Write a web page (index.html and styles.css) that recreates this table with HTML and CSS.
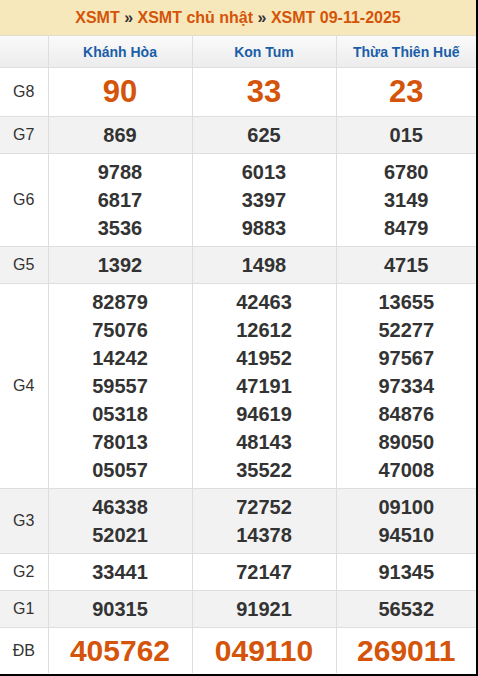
FILE: index.html
```html
<!DOCTYPE html>
<html lang="vi">
<head>
<meta charset="utf-8">
<title>XSMT 09-11-2025</title>
<link rel="stylesheet" href="styles.css">
</head>
<body>
<div class="frame">
  <div class="title">
    <span class="t">XSMT</span> <span class="sep">»</span> <span class="t">XSMT chủ nhật</span> <span class="sep">»</span> <span class="t">XSMT 09-11-2025</span>
  </div>
  <table class="kq">
    <colgroup>
      <col class="c-lbl"><col class="c-p"><col class="c-p"><col class="c-p3">
    </colgroup>
    <thead>
      <tr><th></th><th>Khánh Hòa</th><th>Kon Tum</th><th>Thừa Thiên Huế</th></tr>
    </thead>
    <tbody>
      <tr class="big"><td class="lbl">G8</td><td>90</td><td>33</td><td>23</td></tr>
      <tr class="alt"><td class="lbl">G7</td><td>869</td><td>625</td><td>015</td></tr>
      <tr><td class="lbl">G6</td><td>9788<br>6817<br>3536</td><td>6013<br>3397<br>9883</td><td>6780<br>3149<br>8479</td></tr>
      <tr class="alt"><td class="lbl">G5</td><td>1392</td><td>1498</td><td>4715</td></tr>
      <tr><td class="lbl">G4</td>
        <td>82879<br>75076<br>14242<br>59557<br>05318<br>78013<br>05057</td>
        <td>42463<br>12612<br>41952<br>47191<br>94619<br>48143<br>35522</td>
        <td>13655<br>52277<br>97567<br>97334<br>84876<br>89050<br>47008</td></tr>
      <tr class="alt"><td class="lbl">G3</td><td>46338<br>52021</td><td>72752<br>14378</td><td>09100<br>94510</td></tr>
      <tr><td class="lbl">G2</td><td>33441</td><td>72147</td><td>91345</td></tr>
      <tr class="alt"><td class="lbl">G1</td><td>90315</td><td>91921</td><td>56532</td></tr>
      <tr class="big db"><td class="lbl">ĐB</td><td>405762</td><td>049110</td><td>269011</td></tr>
    </tbody>
  </table>
</div>
</body>
</html>
```

FILE: styles.css
```css
html, body {
  margin: 0;
  padding: 0;
  background: #fff;
}
body {
  font-family: "Liberation Sans", Arial, sans-serif;
  color: #333;
}
.frame {
  width: 476px;
  height: 674px;
  border-right: 2px solid #000;
  border-bottom: 2px solid #000;
  overflow: hidden;
}
.title {
  height: 36px;
  line-height: 36px;
  background: #f7e8bb;
  text-align: center;
  font-size: 16px;
  font-weight: bold;
  color: #d4540a;
  border-bottom: 1px solid #e3dccb;
  box-sizing: border-box;
}
.title .sep {
  color: #333;
}
.kq {
  width: 476px;
  border-collapse: collapse;
  table-layout: fixed;
}
.c-lbl { width: 48px; }
.c-p { width: 144px; }
.c-p3 { width: 140px; }
.kq th {
  height: 31px;
  padding: 0;
  background: linear-gradient(#fafafa, #ececec);
  color: #1a5ea8;
  font-size: 14px;
  font-weight: bold;
  border: 1px solid #dedede;
  border-top: none;
  text-align: center;
}
.kq th:first-child { border-left: none; }
.kq th:last-child { border-right: none; }
.kq td {
  border: 1px solid #dedede;
  padding: 4px 0;
  text-align: center;
  font-size: 20px;
  font-weight: bold;
  line-height: 28px;
  color: #333;
}
.kq td:first-child { border-left: none; }
.kq td:last-child { border-right: none; }
.kq tr:last-child td { border-bottom: none; }
.kq td.lbl {
  font-size: 16px;
  font-weight: normal;
  color: #333;
}
.kq tr.alt td {
  background: #f2f2f2;
}
.kq tr.big td {
  font-size: 31px;
  line-height: 40px;
  color: #d4540a;
}
.kq tr.db td {
  font-size: 30px;
  line-height: 37px;
}
.kq tr.big td.lbl {
  font-size: 16px;
  color: #333;
}
```
